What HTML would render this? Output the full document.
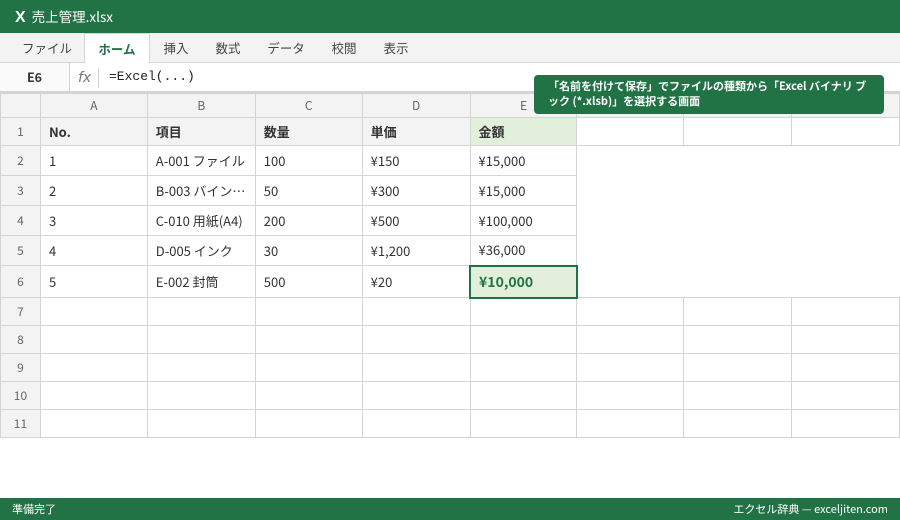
<!DOCTYPE html>
<html><head><meta charset="utf-8"><style>
*{box-sizing:border-box;margin:0;padding:0}
body{width:900px;height:520px;overflow:hidden;background:#fff;font-family:"Noto Sans CJK JP","Liberation Sans",sans-serif;font-size:13px;color:#333;position:relative}
.title{position:absolute;left:0;top:0;width:900px;height:33px;background:#217346;color:#fff;font-size:13.5px;line-height:33px;padding-left:15px}
.title b{font-size:16px;margin-right:6px;font-family:"Liberation Sans",sans-serif}
.tabs{position:absolute;top:33px;left:0;width:900px;height:30px;background:#f3f3f3;border-bottom:1px solid #d4d4d4}
.tab{position:absolute;top:0;height:30px;line-height:30px;font-size:12.5px;color:#444;text-align:center}
.tab.act{background:#fff;border:1px solid #d4d4d4;border-bottom:none;height:31px;color:#217346;font-weight:bold}
.fbar{position:absolute;top:63px;left:0;width:900px;height:30px;border-bottom:2px solid #d4d4d4;background:#fff}
.nb{position:absolute;left:0;top:0;width:70px;height:28px;line-height:28px;text-align:center;font-weight:bold;font-size:12.5px;border-right:1px solid #d4d4d4;background:#fafafa}
.fx{position:absolute;left:78px;top:0;line-height:30px;font-style:italic;color:#777;font-family:"DejaVu Sans",sans-serif;font-size:14px}
.fs{position:absolute;left:98px;top:5px;height:20px;border-left:1px solid #d4d4d4}
.fm{position:absolute;left:109px;top:0;line-height:28px;font-family:"Liberation Mono",monospace;font-size:13px;color:#222}
table{position:absolute;top:93px;left:0;border-collapse:collapse;table-layout:fixed}
td{border:1px solid #d4d4d4;padding:0 8px;white-space:nowrap;overflow:hidden;font-size:13px;line-height:16px}
td.h{background:#f3f3f3;text-align:center;color:#666;padding:0;font-size:12px}
tr.r1 td{background:#f3f3f3;font-weight:bold}
tr.r1 td.e{background:#e2efda}
tr.r1 td.w{background:#fff}
td.n{border:none}
td.sel{background:#e2efda;border:2px solid #217346;color:#217346;font-weight:bold;font-size:14px}
.tip{position:absolute;left:534px;top:75px;width:350px;height:39px;background:#217346;color:#fff;border-radius:4px;font-size:11px;font-weight:bold;line-height:15px;padding:4px 14px}
.status{position:absolute;left:0;top:498px;width:900px;height:22px;background:#217346;color:#fff;font-size:11px;line-height:22px;padding:0 12px}
.status span{position:absolute;right:12px}
</style></head><body>
<div class="title"><b>X</b>売上管理.xlsx</div>
<div class="tabs">
<div class="tab" style="left:10px;width:74px">ファイル</div>
<div class="tab act" style="left:84px;width:66px">ホーム</div>
<div class="tab" style="left:150px;width:52px">挿入</div>
<div class="tab" style="left:202px;width:52px">数式</div>
<div class="tab" style="left:254px;width:64px">データ</div>
<div class="tab" style="left:318px;width:52px">校閲</div>
<div class="tab" style="left:370px;width:52px">表示</div>
</div>
<div class="fbar"><div class="nb">E6</div><div class="fx">fx</div><div class="fs"></div><div class="fm">=Excel(...)</div></div>
<table>
<colgroup><col style="width:40px"><col style="width:107px"><col style="width:108px"><col style="width:107px"><col style="width:108px"><col style="width:107px"><col style="width:107px"><col style="width:108px"><col style="width:108px"></colgroup>
<tr style="height:24px"><td class="h"></td><td class="h">A</td><td class="h">B</td><td class="h">C</td><td class="h">D</td><td class="h">E</td><td class="h"></td><td class="h"></td><td class="h"></td></tr>
<tr class="r1" style="height:28px"><td class="h" style="font-weight:normal">1</td><td>No.</td><td>項目</td><td>数量</td><td>単価</td><td class="e">金額</td><td class="w"></td><td class="w"></td><td class="w"></td></tr>
<tr style="height:30px"><td class="h">2</td><td>1</td><td>A-001 ファイル</td><td>100</td><td>¥150</td><td>¥15,000</td><td class="n"></td><td class="n"></td><td class="n"></td></tr>
<tr style="height:30px"><td class="h">3</td><td>2</td><td>B-003 バイン…</td><td>50</td><td>¥300</td><td>¥15,000</td><td class="n"></td><td class="n"></td><td class="n"></td></tr>
<tr style="height:30px"><td class="h">4</td><td>3</td><td>C-010 用紙(A4)</td><td>200</td><td>¥500</td><td>¥100,000</td><td class="n"></td><td class="n"></td><td class="n"></td></tr>
<tr style="height:30px"><td class="h">5</td><td>4</td><td>D-005 インク</td><td>30</td><td>¥1,200</td><td>¥36,000</td><td class="n"></td><td class="n"></td><td class="n"></td></tr>
<tr style="height:32px"><td class="h">6</td><td>5</td><td>E-002 封筒</td><td>500</td><td>¥20</td><td class="sel">¥10,000</td><td class="n"></td><td class="n"></td><td class="n"></td></tr>
<tr style="height:28px"><td class="h">7</td><td></td><td></td><td></td><td></td><td></td><td></td><td></td><td></td></tr>
<tr style="height:28px"><td class="h">8</td><td></td><td></td><td></td><td></td><td></td><td></td><td></td><td></td></tr>
<tr style="height:28px"><td class="h">9</td><td></td><td></td><td></td><td></td><td></td><td></td><td></td><td></td></tr>
<tr style="height:28px"><td class="h">10</td><td></td><td></td><td></td><td></td><td></td><td></td><td></td><td></td></tr>
<tr style="height:28px"><td class="h">11</td><td></td><td></td><td></td><td></td><td></td><td></td><td></td><td></td></tr>
</table>
<div class="tip">「名前を付けて保存」でファイルの種類から「Excel バイナリ ブック (*.xlsb)」を選択する画面</div>
<div class="status">準備完了<span>エクセル辞典 — exceljiten.com</span></div>
</body></html>
